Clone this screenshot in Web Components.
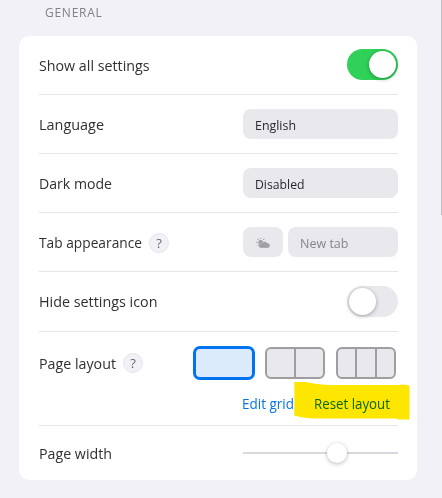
<!DOCTYPE html>
<html lang="en">
<head>
<meta charset="utf-8">
<title>Settings</title>
<style>
html,body{margin:0;height:100%;overflow:hidden;background:#f2f1f7}
body{font-family:"Open Sans","Noto Sans",sans-serif;font-size:15px;color:#303032}
</style>
</head>
<body>
<settings-panel></settings-panel>
<script>
const define = (name, html, setup) => customElements.define(name, class extends HTMLElement {
  connectedCallback() {
    if (this.shadowRoot) return;
    this.attachShadow({mode: 'open'}).innerHTML = html;
    if (setup) setup(this, this.shadowRoot);
  }
});

/* One line of text, condensed (or tracked, with "track") to the width in its "w" attribute. */
define('fit-text', `<style>
:host{display:block;flex:none;white-space:nowrap;line-height:20px}
span{display:inline-block;transform-origin:0 50%}
</style><span><slot></slot></span>`, (el, root) => {
  const w = +el.getAttribute('w');
  const s = root.querySelector('span');
  const natural = s.getBoundingClientRect().width;
  if (el.hasAttribute('track')) s.style.letterSpacing = (w - natural) / el.textContent.length + 'px';
  else s.style.transform = `scaleX(${w / natural})`;
  el.style.width = w + 'px';
});

define('setting-row', `<style>
:host{display:flex;box-sizing:border-box;height:59px;border-bottom:1px solid #e6e6ea;align-items:center;justify-content:space-between}
:host([last]){border-bottom:0;height:54px}
:host([tall]){height:94px;align-items:flex-start;padding-top:14px}
:host([mid]){height:60px}
.l{display:flex;align-items:center;gap:7px;padding-top:1px}
:host([tall]) .l{padding-top:7px}
:host(:not([tall])) ::slotted(fit-text){margin-bottom:2px}
</style><div class="l"><slot name="label"></slot></div><slot></slot>`);

define('help-dot', `<style>
:host{display:flex;box-sizing:border-box;width:20px;height:20px;border-radius:50%;background:#f2f1f7;border:1px solid #e6e5eb;align-items:center;justify-content:center;font-size:13px;line-height:18px;color:#68686c}
</style><span>?</span>`);

define('toggle-switch', `<style>
:host{display:flex;box-sizing:border-box;width:51px;height:31px;border-radius:16px;padding:2px;background:#e9e8ed}
:host([on]){background:#30d158;justify-content:flex-end;margin-bottom:1px}
i{width:27px;height:27px;border-radius:50%;background:#fff;box-shadow:0 1px 4px rgba(0,0,0,.32)}
</style><i></i>`);

define('field-box', `<style>
:host{display:flex;box-sizing:border-box;width:155px;height:30px;border-radius:8px;background:#e9e8ed;align-items:center;padding:1px 0 0 12px;font-size:13px;color:#29292b}
:host([muted]){width:110px;color:#858589}
:host([icon]){width:40px;padding:2px 0 0;justify-content:center}
</style><slot></slot>`);

define('weather-icon', `<style>:host{display:block;width:14px;height:11px}svg{display:block}</style>
<svg width="14" height="11" viewBox="0 0 14 11" fill="#a0a0a2">
<circle cx="4.7" cy="4.400" r="2.500"/>
<path d="M4.300 0h1v1.100h-1zM1.200 1.200l.8-.6 1 .9-.8.7zM7 1.500l.9-1 .8.6-.9 1.100zM.1 3.800h1.300v.9H.1zM1 7.200l.9-.8.6.6-.8.8z"/>
<path d="M4.700 10a2.500 2.500 0 0 1-.3-4.900c.5-.1.9 0 1.200.1A3.400 3.400 0 0 1 11.200 5a2.500 2.500 0 0 1 .4 5z" stroke="#e9e8ed" stroke-width=".3"/>
</svg>`);

define('layout-option', `<style>
:host{display:flex;box-sizing:border-box;width:60px;height:32px;margin:1px 0;border:2px solid #9e9ea0;border-radius:6px;background:#e9e8ed;overflow:hidden}
:host([selected]){width:62px;height:34px;margin:0;border:3px solid #0073f0;border-radius:7px;background:#dcebfb}
i{flex:1}i+i{border-left:2px solid #9e9ea0}
</style>`, (el, root) => {
  for (let i = 0; i < +el.getAttribute('columns'); i++) root.appendChild(document.createElement('i'));
});

define('layout-picker', `<style>
:host{display:block;width:205px}
.o{display:flex}
.o :nth-child(2){margin-left:10px}.o :nth-child(3){margin-left:11px}
.k{display:flex;gap:20px;margin:14px 0 0 49px;color:#0873e2;font-size:14px}
.m{position:relative}
svg{position:absolute;left:-20px;top:-13px;mix-blend-mode:multiply;pointer-events:none}
</style>
<div class="o"><layout-option selected columns="1"></layout-option><layout-option columns="2"></layout-option><layout-option columns="3"></layout-option></div>
<div class="k"><fit-text w="52">Edit grid</fit-text><div class="m"><fit-text w="76">Reset layout</fit-text>
<svg width="117" height="40" viewBox="0 0 117 40"><path d="M.3 1H12Q22 3.400 34 4H104L109 3.400 115.500 4.500V38.500H104L102 37.600H18Q9 36.800.3 34.800Z" fill="#ffe600"/></svg></div></div>`);

define('range-slider', `<style>
:host{display:flex;width:155px;height:20px;align-items:center;background:linear-gradient(#d9d8de,#d9d8de) 0 50%/100% 2px no-repeat}
i{width:20px;height:20px;margin-left:84px;border-radius:50%;background:#fff;box-shadow:0 1px 4px rgba(0,0,0,.28)}
</style><i></i>`);

define('settings-panel', `<style>
:host{display:flex;justify-content:space-between;height:498px}
main{width:398px;margin-left:19px}
h2{margin:0;padding:3px 0 0 26px;height:33px;font-size:12px;font-weight:400;color:#818186}
section{display:block;box-sizing:border-box;height:444px;padding:0 19px 0 20px;background:#fff;border-radius:10px}
.tab{display:flex;gap:5px}
aside{width:1px;height:215px;background:#bfbec5}
</style>
<main><h2><fit-text track w="57.500">GENERAL</fit-text></h2>
<section>
<setting-row><fit-text slot="label" w="110.500">Show all settings</fit-text><toggle-switch on></toggle-switch></setting-row>
<setting-row><fit-text slot="label" w="65">Language</fit-text><field-box><fit-text w="41">English</fit-text></field-box></setting-row>
<setting-row><fit-text slot="label" w="73">Dark mode</fit-text><field-box><fit-text w="49.500">Disabled</fit-text></field-box></setting-row>
<setting-row><fit-text slot="label" w="103">Tab appearance</fit-text><help-dot slot="label"></help-dot><div class="tab"><field-box icon><weather-icon></weather-icon></field-box><field-box muted><fit-text w="48.500">New tab</fit-text></field-box></div></setting-row>
<setting-row mid><fit-text slot="label" w="118.500">Hide settings icon</fit-text><toggle-switch></toggle-switch></setting-row>
<setting-row tall><fit-text slot="label" w="77">Page layout</fit-text><help-dot slot="label"></help-dot><layout-picker></layout-picker></setting-row>
<setting-row last><fit-text slot="label" w="73">Page width</fit-text><range-slider></range-slider></setting-row>
</section></main><aside></aside>`);
</script>
</body>
</html>
